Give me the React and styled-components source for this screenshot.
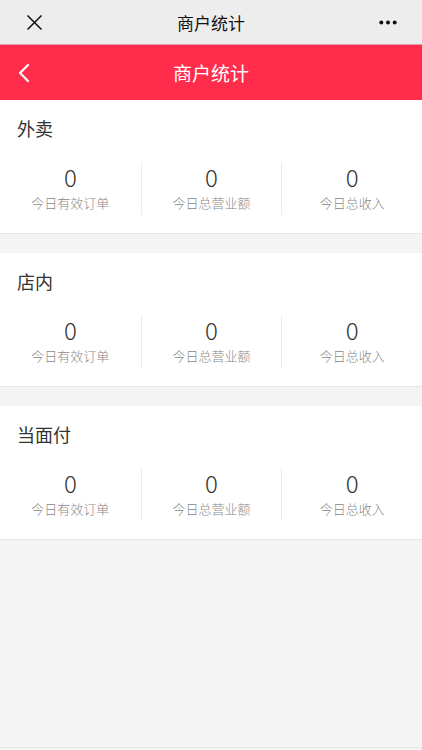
import styled, { createGlobalStyle } from 'styled-components'

const GlobalStyle = createGlobalStyle`
  html, body {
    margin: 0;
    padding: 0;
    background: #f4f4f4;
    font-family: "Noto Sans CJK SC", "Noto Sans", sans-serif;
  }
`

const sections = [
  { name: '外卖' },
  { name: '店内' },
  { name: '当面付' },
]

const stats = [
  { value: 0, label: '今日有效订单' },
  { value: 0, label: '今日总营业额' },
  { value: 0, label: '今日总收入' },
]

const App = () => {
  return (
    <Page>
      <GlobalStyle />
      <TopBar>
        <IconButton>
          <svg width="17" height="17" viewBox="0 0 17 17">
            <path d="M1.5 1.5 L15.5 15.5 M15.5 1.5 L1.5 15.5" stroke="#111" strokeWidth="1.5" fill="none" />
          </svg>
        </IconButton>
        <TopTitle>商户统计</TopTitle>
        <IconButton>
          <svg width="18" height="5" viewBox="0 0 18 5">
            <circle cx="2.3" cy="2.5" r="2" fill="#111" />
            <circle cx="9" cy="2.5" r="2" fill="#111" />
            <circle cx="15.7" cy="2.5" r="2" fill="#111" />
          </svg>
        </IconButton>
      </TopBar>
      <Header>
        <Back>
          <svg width="14" height="20" viewBox="0 0 14 20">
            <path d="M11 2 L3 10 L11 18" stroke="#fff" strokeWidth="2.2" fill="none" strokeLinecap="round" strokeLinejoin="round" />
          </svg>
        </Back>
        <HeaderTitle>商户统计</HeaderTitle>
      </Header>
      {sections.map((section, i) => (
        <Section key={section.name} first={i === 0}>
          <SectionTitle>{section.name}</SectionTitle>
          <StatsRow>
            {stats.map((stat) => (
              <Stat key={stat.label}>
                <Value>{stat.value}</Value>
                <Label>{stat.label}</Label>
              </Stat>
            ))}
          </StatsRow>
        </Section>
      ))}
    </Page>
  )
}

export default App

const Page = styled.div`
  height: 747px;
  border-bottom: 1px solid #e4e4e4;
  background: #f4f4f4;
`
const TopBar = styled.div`
  height: 44px;
  background: #ededed;
  border-bottom: 1px solid #e0a0a8;
  display: flex;
  align-items: center;
  justify-content: space-between;
  padding: 0 22px 0 22px;
`
const IconButton = styled.div`
  width: 24px;
  display: flex;
  align-items: center;
  justify-content: center;
`
const TopTitle = styled.div`
  font-size: 17px;
  color: #111;
`
const Header = styled.div`
  height: 55px;
  background: #ff2d4b;
  display: flex;
  align-items: center;
  justify-content: center;
  position: relative;
`
const Back = styled.div`
  position: absolute;
  left: 17px;
  top: 18px;
  display: flex;
`
const HeaderTitle = styled.div`
  font-size: 19px;
  color: #fff;
`
const Section = styled.div`
  background: #fff;
  margin-top: ${(p) => (p.first ? '0' : '19px')};
  border-bottom: 1px solid #e6e6e6;
  padding-bottom: 18px;
`
const SectionTitle = styled.div`
  height: 56px;
  line-height: 56px;
  padding-left: 17px;
  font-size: 18px;
  color: #333;
`
const StatsRow = styled.div`
  display: grid;
  grid-template-columns: repeat(3, 1fr);
  margin-top: 6px;
`
const Stat = styled.div`
  display: flex;
  flex-direction: column;
  align-items: center;
  height: 53px;
  & + & {
    border-left: 1px solid #ececec;
  }
`
const Value = styled.div`
  font-size: 24px;
  font-weight: 300;
  line-height: 30px;
  color: #333;
`
const Label = styled.div`
  font-size: 13px;
  font-weight: 300;
  line-height: 22px;
  color: #888;
`
